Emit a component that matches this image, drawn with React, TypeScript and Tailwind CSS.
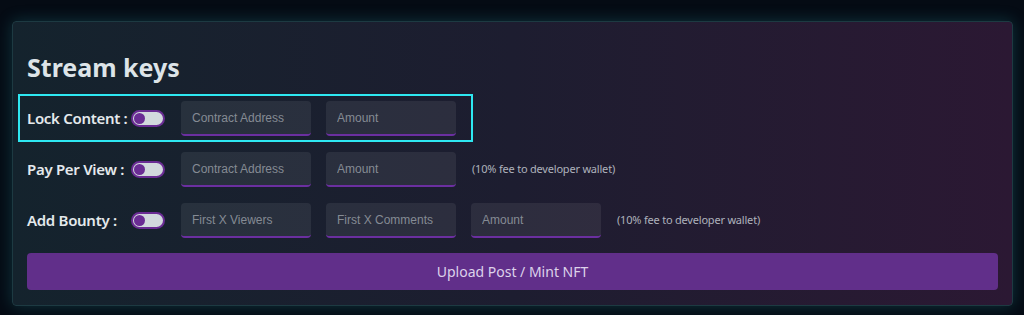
import type { JSX } from "react";

const Toggle = (): JSX.Element => (
  <div className="flex h-[17px] w-[34px] shrink-0 items-center rounded-full border-2 border-[#6a2c94] bg-[#d2d9dd] px-[1px]">
    <div className="h-[11px] w-[11px] rounded-full bg-[#6a2c94]" />
  </div>
);

const Field = ({ placeholder }: { placeholder: string }): JSX.Element => (
  <input
    placeholder={placeholder}
    className="h-[35px] w-[130px] shrink-0 rounded-[4px] border-b-2 border-[#6b2fa0] bg-white/[0.07] px-[11px] text-[12px] text-[#c8ccd2] outline-none placeholder:text-[#858b94] [font-family:'Liberation_Sans',Arial,sans-serif]"
  />
);

const Row = ({
  label,
  fields,
  note,
}: {
  label: string;
  fields: string[];
  note?: string;
}): JSX.Element => (
  <div className="flex items-center">
    <span className="w-[104px] shrink-0 text-[15px] font-semibold tracking-[-0.3px] text-[#e4e9ec]">
      {label}
    </span>
    <Toggle />
    <div className="ml-4 flex items-center gap-[15px]">
      {fields.map((f) => (
        <Field key={f} placeholder={f} />
      ))}
      {note && (
        <span className="ml-[1px] text-[11px] tracking-[-0.2px] text-[#aeb2bc]">
          {note}
        </span>
      )}
    </div>
  </div>
);

export default function App(): JSX.Element {
  return (
    <div className="h-[315px] w-[1024px] bg-[#050b14] pl-3 pr-[11px] pt-[21px] [font-family:'Noto_Sans',sans-serif]">
      <div className="relative flex h-[285px] flex-col rounded-[4px] border border-[#1d3a42] bg-linear-to-r from-[#14232d] via-[#1d1d30] to-[#2b1833] px-[14px] pb-[15px] pt-[29px] shadow-[0_0_16px_rgba(40,150,160,0.3)]">
        <h1 className="mb-[18px] text-[25px] font-bold leading-[32px] text-[#dde4e8]">
          Stream keys
        </h1>
        <div className="flex flex-col gap-4">
          <Row label="Lock Content :" fields={["Contract Address", "Amount"]} />
          <Row
            label="Pay Per View :"
            fields={["Contract Address", "Amount"]}
            note="(10% fee to developer wallet)"
          />
          <Row
            label="Add Bounty :"
            fields={["First X Viewers", "First X Comments", "Amount"]}
            note="(10% fee to developer wallet)"
          />
        </div>
        <button className="mt-[15px] h-[37px] w-full shrink-0 rounded-[4px] bg-[#612f8a] text-[14px] text-[#ddd2ea]">
          Upload Post / Mint NFT
        </button>
        <div className="pointer-events-none absolute left-[5px] top-[72px] h-[48px] w-[455px] border-2 border-[#2ee8f2]" />
      </div>
    </div>
  );
}
